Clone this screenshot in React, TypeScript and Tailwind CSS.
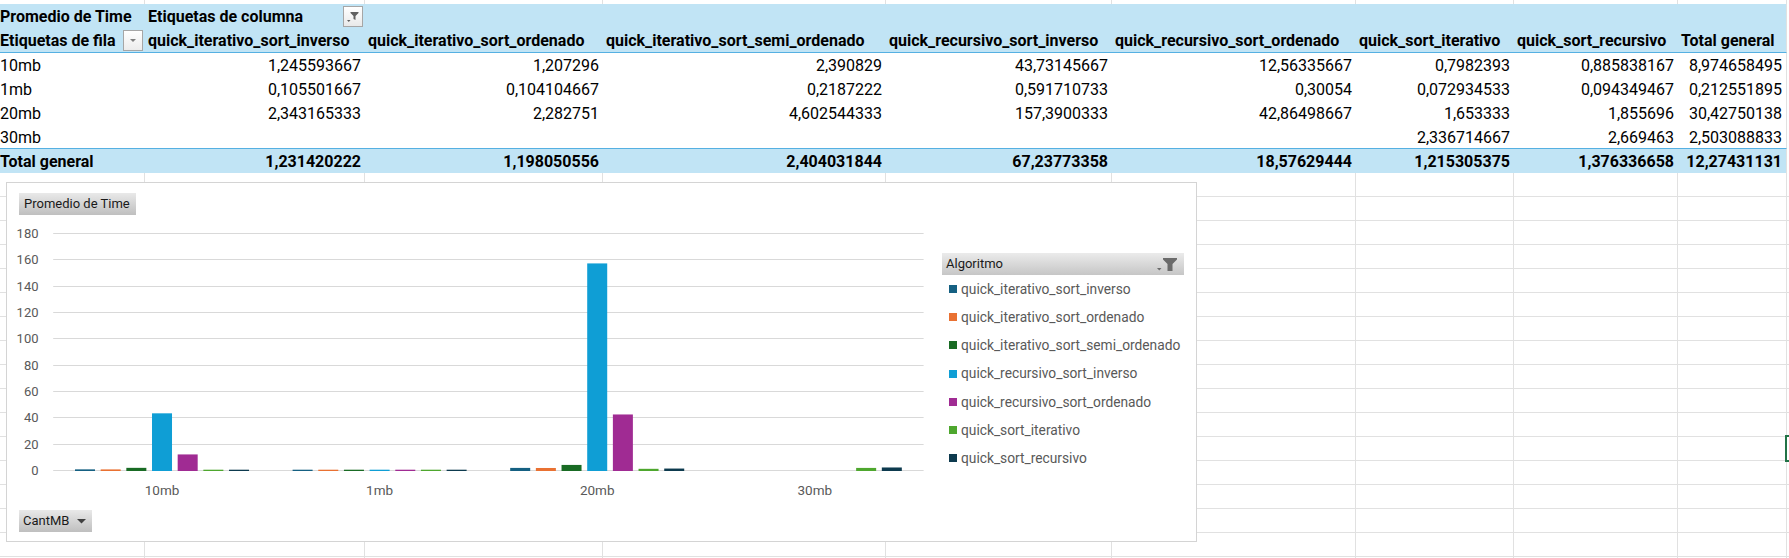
import React from "react";

const COLW = [
  "w-[145px]",
  "w-[220px]",
  "w-[238px]",
  "w-[283px]",
  "w-[226px]",
  "w-[244px]",
  "w-[158px]",
  "w-[164px]",
  "w-[109px]",
  "w-[2px]",
];

const HEADERS = [
  "quick_iterativo_sort_inverso",
  "quick_iterativo_sort_ordenado",
  "quick_iterativo_sort_semi_ordenado",
  "quick_recursivo_sort_inverso",
  "quick_recursivo_sort_ordenado",
  "quick_sort_iterativo",
  "quick_sort_recursivo",
  "Total general",
];

const ROWS = [
  ["10mb", "1,245593667", "1,207296", "2,390829", "43,73145667", "12,56335667", "0,7982393", "0,885838167", "8,974658495"],
  ["1mb", "0,105501667", "0,104104667", "0,2187222", "0,591710733", "0,30054", "0,072934533", "0,094349467", "0,212551895"],
  ["20mb", "2,343165333", "2,282751", "4,602544333", "157,3900333", "42,86498667", "1,653333", "1,855696", "30,42750138"],
  ["30mb", "", "", "", "", "", "2,336714667", "2,669463", "2,503088833"],
];

const TOTAL = ["Total general", "1,231420222", "1,198050556", "2,404031844", "67,23773358", "18,57629444", "1,215305375", "1,376336658", "12,27431131"];

const SERIES: { name: string; color: string; v: (number | null)[] }[] = [
  { name: "quick_iterativo_sort_inverso", color: "#156082", v: [1.245593667, 0.105501667, 2.343165333, null] },
  { name: "quick_iterativo_sort_ordenado", color: "#E97132", v: [1.207296, 0.104104667, 2.282751, null] },
  { name: "quick_iterativo_sort_semi_ordenado", color: "#196B24", v: [2.390829, 0.2187222, 4.602544333, null] },
  { name: "quick_recursivo_sort_inverso", color: "#0F9ED5", v: [43.73145667, 0.591710733, 157.3900333, null] },
  { name: "quick_recursivo_sort_ordenado", color: "#A02B93", v: [12.56335667, 0.30054, 42.86498667, null] },
  { name: "quick_sort_iterativo", color: "#4EA72E", v: [0.7982393, 0.072934533, 1.653333, 2.336714667] },
  { name: "quick_sort_recursivo", color: "#0D3A4E", v: [0.885838167, 0.094349467, 1.855696, 2.669463] },
];

const CATS = ["10mb", "1mb", "20mb", "30mb"];

function FilterButton() {
  return (
    <div className="mt-[2px] mr-[2px] w-[20px] h-[21px] shrink-0 border border-[#a6a6a6] bg-gradient-to-b from-white to-[#e9e9e9]">
      <svg width="18" height="19" viewBox="0 0 18 19" className="block">
        <polygon points="3,13 6.5,13 4.75,15" fill="#606060" />
        <polygon points="6.5,5 14.5,5 14.5,6 11.5,9 11.5,13 9.5,12 9.5,9 6.5,6" fill="#606060" />
      </svg>
    </div>
  );
}

function DropButton() {
  return (
    <div className="mt-[2px] mr-[2px] w-[20px] h-[21px] shrink-0 border border-[#a6a6a6] bg-gradient-to-b from-white to-[#ececec] flex items-center justify-center">
      <svg width="8" height="5" viewBox="0 0 8 5" className="block">
        <polygon points="1,1 7,1 4,4" fill="#7f7f7f" />
      </svg>
    </div>
  );
}

function Chart() {
  const X0 = 46.2;
  const CW = 217.6;
  const Y0 = 256;
  const U = 1.3189;
  const ticks = [0, 20, 40, 60, 80, 100, 120, 140, 160, 180];
  return (
    <div className="absolute left-[6px] top-[182px] w-[1191px] h-[360px] border border-[#d4d4d4] bg-white flex">
      <div className="w-[935px] shrink-0 flex flex-col">
        <div className="ml-[12px] mt-[10px] w-[117px] h-[22px] pl-[5px] flex items-center bg-gradient-to-b from-[#e9e9e9] to-[#bfbfbf] text-[13px] text-[#1a1a1a]">
          Promedio de Time
        </div>
        <svg width="925" height="290" className="block">
          {ticks.map((t, k) => {
            const y = Math.floor(470.7 - 26.38 * k) - 215;
            return (
              <g key={t}>
                <rect x={X0} y={y} width={CW * 4} height={1} fill="#d9d9d9" />
                <text x={31.5} y={y + 5.1} textAnchor="end" fontFamily="Roboto" fontSize="13" fill="#595959">
                  {t}
                </text>
              </g>
            );
          })}
          {CATS.map((c, ci) => (
            <text
              key={c}
              x={X0 + CW * (ci + 0.5)}
              y={280}
              textAnchor="middle"
              fontFamily="Roboto"
              fontSize="13.5"
              fill="#595959"
            >
              {c}
            </text>
          ))}
          {CATS.map((_, ci) =>
            SERIES.map((s, k) => {
              const v = s.v[ci];
              if (v === null) return null;
              const h = Math.max(v * U, 1.3);
              return (
                <rect
                  key={`${ci}-${k}`}
                  x={X0 + CW * ci + 21.8 + 25.67 * k}
                  y={Y0 - h}
                  width={20}
                  height={h}
                  fill={s.color}
                />
              );
            })
          )}
        </svg>
        <div className="ml-[12px] mt-[5px] w-[73px] h-[22px] pl-[4px] pr-[6px] flex items-center justify-between bg-gradient-to-b from-[#e9e9e9] to-[#bfbfbf] text-[13px] text-[#1a1a1a]">
          <span>CantMB</span>
          <svg width="9" height="5" viewBox="0 0 9 5" className="block">
            <polygon points="0,0 9,0 4.5,4.5" fill="#404040" />
          </svg>
        </div>
      </div>
      <div className="pt-[70px] w-[242px] shrink-0">
        <div className="h-[22px] pl-[4px] pr-[6px] flex items-center justify-between bg-gradient-to-b from-[#ebebeb] to-[#c6c6c6] text-[13px] text-[#1a1a1a]">
          <span>Algoritmo</span>
          <svg width="21" height="16" viewBox="0 0 21 16" className="block">
            <polygon points="0,12 4.5,12 2.25,14.5" fill="#6b6b6b" />
            <polygon points="6,2 20,2 20,3.5 15.5,8 15.5,15 10.5,15 10.5,8 6,3.5" fill="#6b6b6b" />
          </svg>
        </div>
        {SERIES.map((s) => (
          <div key={s.name} className="h-[28.2px] pl-[7px] flex items-center gap-[4px]">
            <div className="w-[8px] h-[8px] shrink-0" style={{ backgroundColor: s.color }} />
            <span className="text-[13.75px] text-[#595959] whitespace-nowrap">{s.name}</span>
          </div>
        ))}
      </div>
    </div>
  );
}

export default function App() {
  const band = "bg-[#c1e4f5]";
  return (
    <div className="relative w-[1789px] h-[558px] overflow-hidden bg-white font-[Roboto,sans-serif] text-black">
      {/* top partial row */}
      <div className="h-[4px] flex">
        {COLW.map((w, i) => (
          <div key={i} className={`${w} shrink-0 h-full ${i < 9 ? "border-r border-[#e1e1e1]" : ""}`} />
        ))}
      </div>

      {/* pivot header row 1 */}
      <div className="h-[24px] flex text-[16px] font-bold leading-[26px] whitespace-nowrap">
        {COLW.map((w, i) => {
          if (i === 0)
            return (
              <div key={i} className={`${w} shrink-0 h-full ${band}`}>
                Promedio de Time
              </div>
            );
          if (i === 1)
            return (
              <div key={i} className={`${w} shrink-0 h-full ${band} pl-[3px] flex justify-between items-start`}>
                <span>Etiquetas de columna</span>
                <FilterButton />
              </div>
            );
          if (i === 8) return <div key={i} className={`${w} shrink-0 h-full ${band} border-r border-[#e1e1e1]`} />;
          if (i === 9) return <div key={i} className={`${w} shrink-0 h-full`} />;
          return <div key={i} className={`${w} shrink-0 h-full ${band}`} />;
        })}
      </div>

      {/* pivot header row 2 */}
      <div className="h-[25px] flex text-[16px] font-bold leading-[26px] whitespace-nowrap">
        {COLW.map((w, i) => {
          if (i === 0)
            return (
              <div key={i} className={`${w} shrink-0 h-full ${band} border-b border-[#55b0e2] flex justify-between items-start`}>
                <span>Etiquetas de fila</span>
                <DropButton />
              </div>
            );
          if (i === 9) return <div key={i} className={`${w} shrink-0 h-full`} />;
          return (
            <div
              key={i}
              className={`${w} shrink-0 h-full ${band} border-b border-b-[#55b0e2] pl-[3px] ${i === 8 ? "border-r border-r-[#e1e1e1]" : ""}`}
            >
              {HEADERS[i - 1]}
            </div>
          );
        })}
      </div>

      {/* data rows */}
      {ROWS.map((r, ri) => (
        <div key={ri} className={`${ri === 3 ? "h-[23px]" : "h-[24px]"} flex text-[16px] leading-[26px] whitespace-nowrap`}>
          {COLW.map((w, i) => {
            if (i === 9) return <div key={i} className={`${w} shrink-0 h-full`} />;
            if (i === 0)
              return (
                <div key={i} className={`${w} shrink-0 h-full`}>
                  {r[0]}
                </div>
              );
            return (
              <div key={i} className={`${w} shrink-0 h-full text-right pr-[4px] ${i === 8 ? "border-r border-[#e1e1e1]" : ""}`}>
                {r[i]}
              </div>
            );
          })}
        </div>
      ))}

      {/* total row */}
      <div className="h-[25px] flex text-[16px] font-bold leading-[26px] whitespace-nowrap">
        {COLW.map((w, i) => {
          if (i === 9) return <div key={i} className={`${w} shrink-0 h-full`} />;
          if (i === 0)
            return (
              <div key={i} className={`${w} shrink-0 h-full ${band} border-t border-[#55b0e2]`}>
                {TOTAL[0]}
              </div>
            );
          return (
            <div
              key={i}
              className={`${w} shrink-0 h-full ${band} border-t border-t-[#55b0e2] text-right pr-[4px] ${i === 8 ? "border-r border-r-[#e1e1e1]" : ""}`}
            >
              {TOTAL[i]}
            </div>
          );
        })}
      </div>

      {/* empty grid rows */}
      {Array.from({ length: 17 }).map((_, ri) => (
        <div key={ri} className="h-[24px] flex">
          {COLW.map((w, i) => (
            <div
              key={i}
              className={`${w} shrink-0 h-full border-b border-[#e1e1e1] ${i < 9 ? "border-r" : ""}`}
            />
          ))}
        </div>
      ))}

      <Chart />

      {/* selected cell */}
      <div className="absolute left-[1785px] top-[435px] w-[12px] h-[27px] border-2 border-[#217346]" />
    </div>
  );
}
